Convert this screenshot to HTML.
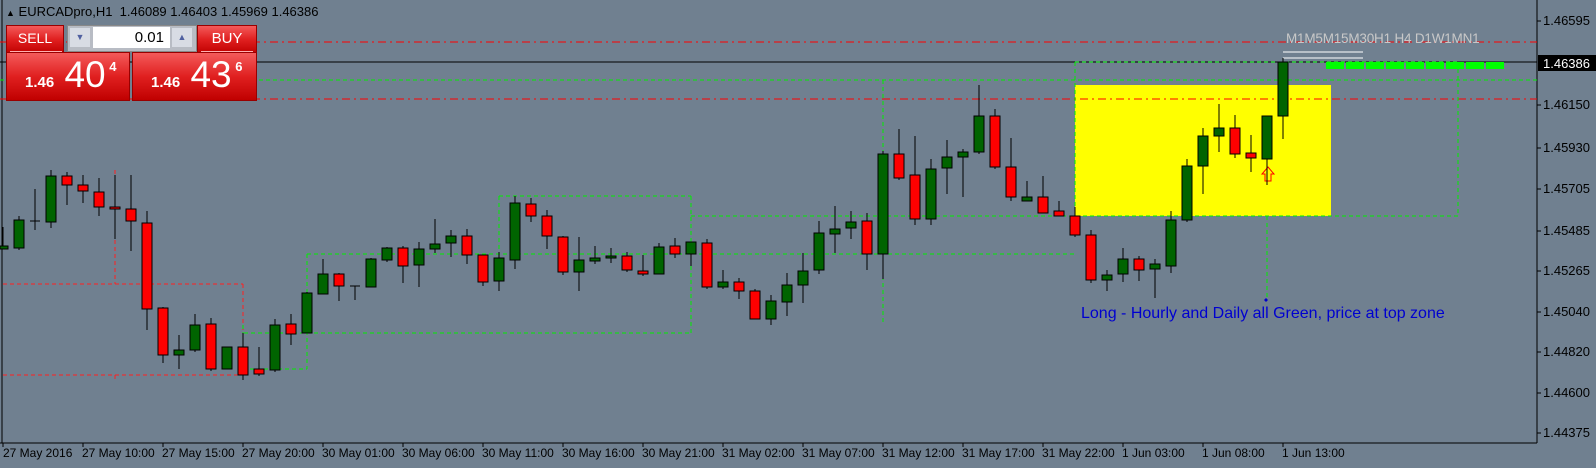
<!DOCTYPE html>
<html><head><meta charset="utf-8"><style>
body{margin:0;width:1596px;height:468px;background:#708090;overflow:hidden;font-family:"Liberation Sans",sans-serif;position:relative}
.a{position:absolute}
.t{font-size:12px;color:#000;white-space:nowrap}
.red{background:linear-gradient(#f45a5a,#e02020 50%,#c00000);border:1px solid #900}
</style></head><body>
<svg class="a" style="left:0;top:0" width="1596" height="468" shape-rendering="crispEdges">
<line x1="2" y1="0" x2="2" y2="443" stroke="#000"/>
<line x1="1537" y1="0" x2="1537" y2="443" stroke="#000"/>
<line x1="0" y1="443" x2="1537" y2="443" stroke="#000"/>
<rect x="1075" y="85" width="256" height="131" fill="#ffff00"/>
<g stroke="#ff0000" stroke-dasharray="8,4,2,4" fill="none">
<line x1="0" y1="42" x2="1537" y2="42"/><line x1="0" y1="99" x2="1537" y2="99"/>
</g>
<line x1="0" y1="62" x2="1537" y2="62" stroke="#000"/>
<g stroke="#ff2020" stroke-dasharray="4,3" fill="none">
<line x1="3" y1="284" x2="243" y2="284"/><line x1="243" y1="284" x2="243" y2="375"/><line x1="3" y1="375" x2="243" y2="375"/><line x1="115" y1="170" x2="115" y2="284"/><line x1="115" y1="375" x2="115" y2="380"/>
</g>
<g stroke="#00ee00" stroke-dasharray="4,3" fill="none">
<line x1="0" y1="80" x2="1537" y2="80"/>
<line x1="307" y1="254" x2="1075" y2="254"/>
<line x1="691" y1="216" x2="1458" y2="216"/>
<line x1="499" y1="196" x2="691" y2="196"/>
<line x1="499" y1="196" x2="499" y2="254"/>
<line x1="691" y1="196" x2="691" y2="333"/>
<line x1="244" y1="333" x2="691" y2="333"/>
<line x1="243" y1="369" x2="307" y2="369"/>
<line x1="307" y1="254" x2="307" y2="369"/>
<line x1="243" y1="325" x2="243" y2="334"/>
<line x1="883" y1="80" x2="883" y2="322"/>
<line x1="1075" y1="62" x2="1075" y2="216"/>
<line x1="1075" y1="62" x2="1458" y2="62"/>
<line x1="1458" y1="62" x2="1458" y2="216"/>
<line x1="1267" y1="216" x2="1267" y2="300"/>
</g>
<line x1="1283" y1="52" x2="1363" y2="52" stroke="#fff"/>
<line x1="1283" y1="58" x2="1363" y2="58" stroke="#fff"/>
<g fill="#00ff00"><rect x="1326" y="62" width="18" height="7"/><rect x="1346" y="62" width="18" height="7"/><rect x="1366" y="62" width="18" height="7"/><rect x="1386" y="62" width="18" height="7"/><rect x="1406" y="62" width="18" height="7"/><rect x="1426" y="62" width="18" height="7"/><rect x="1446" y="62" width="18" height="7"/><rect x="1466" y="62" width="18" height="7"/><rect x="1486" y="62" width="18" height="7"/></g>
<path d="M1268 167 L1274 174 L1271 174 L1271 181 L1265 181 L1265 174 L1262 174 Z" fill="none" stroke="#ff0000" shape-rendering="auto"/>
<circle cx="1266" cy="300" r="1.5" fill="#0000cc"/>
<g stroke="#000">
<line x1="3" y1="227" x2="3" y2="249"/><line x1="19" y1="216" x2="19" y2="250"/><line x1="35" y1="189" x2="35" y2="230"/><line x1="51" y1="170" x2="51" y2="228"/><line x1="67" y1="172" x2="67" y2="205"/><line x1="83" y1="175" x2="83" y2="203"/><line x1="99" y1="178" x2="99" y2="216"/><line x1="115" y1="175" x2="115" y2="239"/><line x1="131" y1="175" x2="131" y2="251"/><line x1="147" y1="211" x2="147" y2="330"/><line x1="163" y1="307" x2="163" y2="363"/><line x1="179" y1="335" x2="179" y2="369"/><line x1="195" y1="314" x2="195" y2="352"/><line x1="211" y1="318" x2="211" y2="371"/><line x1="227" y1="347" x2="227" y2="369"/><line x1="243" y1="333" x2="243" y2="380"/><line x1="259" y1="347" x2="259" y2="376"/><line x1="275" y1="319" x2="275" y2="372"/><line x1="291" y1="314" x2="291" y2="345"/><line x1="307" y1="292" x2="307" y2="333"/><line x1="323" y1="259" x2="323" y2="294"/><line x1="339" y1="273" x2="339" y2="301"/><line x1="355" y1="286" x2="355" y2="300"/><line x1="371" y1="258" x2="371" y2="287"/><line x1="387" y1="247" x2="387" y2="262"/><line x1="403" y1="246" x2="403" y2="283"/><line x1="419" y1="242" x2="419" y2="287"/><line x1="435" y1="219" x2="435" y2="253"/><line x1="451" y1="230" x2="451" y2="257"/><line x1="467" y1="229" x2="467" y2="264"/><line x1="483" y1="255" x2="483" y2="286"/><line x1="499" y1="252" x2="499" y2="291"/><line x1="515" y1="196" x2="515" y2="269"/><line x1="531" y1="198" x2="531" y2="222"/><line x1="547" y1="210" x2="547" y2="249"/><line x1="563" y1="236" x2="563" y2="275"/><line x1="579" y1="237" x2="579" y2="291"/><line x1="595" y1="246" x2="595" y2="264"/><line x1="611" y1="248" x2="611" y2="263"/><line x1="627" y1="252" x2="627" y2="272"/><line x1="643" y1="255" x2="643" y2="276"/><line x1="659" y1="243" x2="659" y2="274"/><line x1="675" y1="238" x2="675" y2="258"/><line x1="691" y1="242" x2="691" y2="266"/><line x1="707" y1="239" x2="707" y2="289"/><line x1="723" y1="270" x2="723" y2="289"/><line x1="739" y1="278" x2="739" y2="299"/><line x1="755" y1="289" x2="755" y2="319"/><line x1="771" y1="295" x2="771" y2="325"/><line x1="787" y1="273" x2="787" y2="316"/><line x1="803" y1="253" x2="803" y2="303"/><line x1="819" y1="221" x2="819" y2="274"/><line x1="835" y1="206" x2="835" y2="253"/><line x1="851" y1="211" x2="851" y2="239"/><line x1="867" y1="213" x2="867" y2="270"/><line x1="883" y1="151" x2="883" y2="279"/><line x1="899" y1="129" x2="899" y2="180"/><line x1="915" y1="136" x2="915" y2="225"/><line x1="931" y1="159" x2="931" y2="225"/><line x1="947" y1="140" x2="947" y2="194"/><line x1="963" y1="149" x2="963" y2="197"/><line x1="979" y1="85" x2="979" y2="154"/><line x1="995" y1="109" x2="995" y2="169"/><line x1="1011" y1="138" x2="1011" y2="201"/><line x1="1027" y1="181" x2="1027" y2="201"/><line x1="1043" y1="176" x2="1043" y2="213"/><line x1="1059" y1="201" x2="1059" y2="216"/><line x1="1075" y1="207" x2="1075" y2="237"/><line x1="1091" y1="230" x2="1091" y2="283"/><line x1="1107" y1="270" x2="1107" y2="291"/><line x1="1123" y1="248" x2="1123" y2="282"/><line x1="1139" y1="256" x2="1139" y2="281"/><line x1="1155" y1="259" x2="1155" y2="298"/><line x1="1171" y1="211" x2="1171" y2="273"/><line x1="1187" y1="159" x2="1187" y2="222"/><line x1="1203" y1="128" x2="1203" y2="194"/><line x1="1219" y1="104" x2="1219" y2="152"/><line x1="1235" y1="115" x2="1235" y2="158"/><line x1="1251" y1="135" x2="1251" y2="172"/><line x1="1267" y1="116" x2="1267" y2="185"/><line x1="1283" y1="58" x2="1283" y2="139"/>
<line x1="30" y1="221" x2="40" y2="221"/><line x1="350" y1="286" x2="360" y2="286"/>
</g>
<g stroke="#000" fill="#006400">
<rect x="0" y="246" width="8" height="3"/><rect x="14" y="220" width="10" height="28"/><rect x="46" y="176" width="10" height="46"/><rect x="174" y="350" width="10" height="5"/><rect x="190" y="325" width="10" height="25"/><rect x="222" y="347" width="10" height="22"/><rect x="270" y="325" width="10" height="45"/><rect x="302" y="293" width="10" height="40"/><rect x="318" y="274" width="10" height="20"/><rect x="366" y="259" width="10" height="28"/><rect x="382" y="248" width="10" height="12"/><rect x="414" y="249" width="10" height="16"/><rect x="430" y="244" width="10" height="5"/><rect x="446" y="236" width="10" height="7"/><rect x="494" y="258" width="10" height="23"/><rect x="510" y="203" width="10" height="57"/><rect x="574" y="260" width="10" height="12"/><rect x="590" y="258" width="10" height="3"/><rect x="606" y="256" width="10" height="2"/><rect x="654" y="247" width="10" height="27"/><rect x="686" y="242" width="10" height="12"/><rect x="718" y="282" width="10" height="5"/><rect x="766" y="301" width="10" height="18"/><rect x="782" y="285" width="10" height="17"/><rect x="798" y="271" width="10" height="14"/><rect x="814" y="233" width="10" height="37"/><rect x="830" y="229" width="10" height="5"/><rect x="846" y="222" width="10" height="6"/><rect x="878" y="154" width="10" height="100"/><rect x="926" y="169" width="10" height="50"/><rect x="942" y="157" width="10" height="11"/><rect x="958" y="152" width="10" height="5"/><rect x="974" y="116" width="10" height="36"/><rect x="1022" y="197" width="10" height="4"/><rect x="1102" y="275" width="10" height="5"/><rect x="1118" y="259" width="10" height="15"/><rect x="1150" y="264" width="10" height="5"/><rect x="1166" y="220" width="10" height="46"/><rect x="1182" y="166" width="10" height="54"/><rect x="1198" y="136" width="10" height="30"/><rect x="1214" y="128" width="10" height="8"/><rect x="1262" y="116" width="10" height="43"/><rect x="1278" y="62" width="10" height="54"/>
</g>
<g stroke="#000" fill="#ff0000">
<rect x="62" y="176" width="10" height="9"/><rect x="78" y="185" width="10" height="6"/><rect x="94" y="192" width="10" height="15"/><rect x="110" y="207" width="10" height="2"/><rect x="126" y="209" width="10" height="12"/><rect x="142" y="223" width="10" height="86"/><rect x="158" y="308" width="10" height="47"/><rect x="206" y="324" width="10" height="45"/><rect x="238" y="347" width="10" height="28"/><rect x="254" y="369" width="10" height="5"/><rect x="286" y="324" width="10" height="10"/><rect x="334" y="274" width="10" height="12"/><rect x="398" y="248" width="10" height="18"/><rect x="462" y="236" width="10" height="19"/><rect x="478" y="255" width="10" height="27"/><rect x="526" y="204" width="10" height="12"/><rect x="542" y="216" width="10" height="20"/><rect x="558" y="237" width="10" height="35"/><rect x="622" y="256" width="10" height="14"/><rect x="638" y="271" width="10" height="3"/><rect x="670" y="246" width="10" height="8"/><rect x="702" y="243" width="10" height="44"/><rect x="734" y="282" width="10" height="9"/><rect x="750" y="291" width="10" height="28"/><rect x="862" y="221" width="10" height="33"/><rect x="894" y="154" width="10" height="24"/><rect x="910" y="175" width="10" height="44"/><rect x="990" y="116" width="10" height="51"/><rect x="1006" y="167" width="10" height="30"/><rect x="1038" y="197" width="10" height="16"/><rect x="1054" y="211" width="10" height="5"/><rect x="1070" y="216" width="10" height="19"/><rect x="1086" y="235" width="10" height="45"/><rect x="1134" y="259" width="10" height="11"/><rect x="1230" y="128" width="10" height="26"/><rect x="1246" y="153" width="10" height="5"/>
</g>
<g stroke="#000">
<line x1="1537" y1="21" x2="1541" y2="21"/><line x1="1537" y1="105" x2="1541" y2="105"/><line x1="1537" y1="148" x2="1541" y2="148"/><line x1="1537" y1="189" x2="1541" y2="189"/><line x1="1537" y1="231" x2="1541" y2="231"/><line x1="1537" y1="271" x2="1541" y2="271"/><line x1="1537" y1="312" x2="1541" y2="312"/><line x1="1537" y1="352" x2="1541" y2="352"/><line x1="1537" y1="393" x2="1541" y2="393"/><line x1="1537" y1="433" x2="1541" y2="433"/>
<line x1="3" y1="443" x2="3" y2="447"/><line x1="83" y1="443" x2="83" y2="447"/><line x1="163" y1="443" x2="163" y2="447"/><line x1="243" y1="443" x2="243" y2="447"/><line x1="323" y1="443" x2="323" y2="447"/><line x1="403" y1="443" x2="403" y2="447"/><line x1="483" y1="443" x2="483" y2="447"/><line x1="563" y1="443" x2="563" y2="447"/><line x1="643" y1="443" x2="643" y2="447"/><line x1="723" y1="443" x2="723" y2="447"/><line x1="803" y1="443" x2="803" y2="447"/><line x1="883" y1="443" x2="883" y2="447"/><line x1="963" y1="443" x2="963" y2="447"/><line x1="1043" y1="443" x2="1043" y2="447"/><line x1="1123" y1="443" x2="1123" y2="447"/><line x1="1203" y1="443" x2="1203" y2="447"/><line x1="1283" y1="443" x2="1283" y2="447"/>
</g>
</svg>

<div class="a t" style="left:1543px;top:13px;font-size:13px">1.46595</div>
<div class="a" style="left:1538px;top:55px;width:58px;height:16px;background:#000"></div>
<div class="a t" style="left:1543px;top:56px;color:#fff;font-size:13px">1.46386</div>
<div class="a t" style="left:1543px;top:97px;font-size:13px">1.46150</div>
<div class="a t" style="left:1543px;top:140px;font-size:13px">1.45930</div>
<div class="a t" style="left:1543px;top:181px;font-size:13px">1.45705</div>
<div class="a t" style="left:1543px;top:223px;font-size:13px">1.45485</div>
<div class="a t" style="left:1543px;top:263px;font-size:13px">1.45265</div>
<div class="a t" style="left:1543px;top:304px;font-size:13px">1.45040</div>
<div class="a t" style="left:1543px;top:344px;font-size:13px">1.44820</div>
<div class="a t" style="left:1543px;top:385px;font-size:13px">1.44600</div>
<div class="a t" style="left:1543px;top:425px;font-size:13px">1.44375</div>

<div class="a t" style="left:3px;top:446px">27 May 2016</div>
<div class="a t" style="left:82px;top:446px">27 May 10:00</div>
<div class="a t" style="left:162px;top:446px">27 May 15:00</div>
<div class="a t" style="left:242px;top:446px">27 May 20:00</div>
<div class="a t" style="left:322px;top:446px">30 May 01:00</div>
<div class="a t" style="left:402px;top:446px">30 May 06:00</div>
<div class="a t" style="left:482px;top:446px">30 May 11:00</div>
<div class="a t" style="left:562px;top:446px">30 May 16:00</div>
<div class="a t" style="left:642px;top:446px">30 May 21:00</div>
<div class="a t" style="left:722px;top:446px">31 May 02:00</div>
<div class="a t" style="left:802px;top:446px">31 May 07:00</div>
<div class="a t" style="left:882px;top:446px">31 May 12:00</div>
<div class="a t" style="left:962px;top:446px">31 May 17:00</div>
<div class="a t" style="left:1042px;top:446px">31 May 22:00</div>
<div class="a t" style="left:1122px;top:446px">1 Jun 03:00</div>
<div class="a t" style="left:1202px;top:446px">1 Jun 08:00</div>
<div class="a t" style="left:1282px;top:446px">1 Jun 13:00</div>

<div class="a t" style="left:1286px;top:31px;color:#c8c8c8;font-size:13.5px;letter-spacing:-0.2px">M1M5M15M30H1 H4 D1W1MN1</div>
<div class="a" style="left:1081px;top:305px;color:#0000d0;font-size:16px;white-space:nowrap">Long - Hourly and Daily all Green, price at top zone</div>

<div class="a t" style="left:6px;top:4px;font-size:13px"><span style="font-size:9px">&#9650;</span> EURCADpro,H1&nbsp; 1.46089 1.46403 1.45969 1.46386</div>

<div class="a red" style="left:6px;top:25px;width:56px;height:27px;border-bottom:none"></div>
<div class="a" style="left:10px;top:51px;width:52px;height:1px;background:#ffb0b0"></div>
<div class="a" style="left:6px;top:30px;width:58px;text-align:center;color:#fff;font-size:14px">SELL</div>
<div class="a" style="left:67px;top:25px;width:128px;height:25px;background:#b8bcc4;border:1px solid #888"></div>
<div class="a" style="left:70px;top:28px;width:20px;height:19px;background:#d8dce4;color:#5060a0;font-size:9px;text-align:center;line-height:19px">&#9660;</div>
<div class="a" style="left:93px;top:27px;width:77px;height:21px;background:#fff;font-size:15px;text-align:right;line-height:21px;box-sizing:border-box;padding-right:6px">0.01</div>
<div class="a" style="left:172px;top:28px;width:20px;height:19px;background:#d8dce4;color:#5060a0;font-size:9px;text-align:center;line-height:19px">&#9650;</div>
<div class="a red" style="left:197px;top:25px;width:58px;height:27px;border-bottom:none"></div>
<div class="a" style="left:201px;top:51px;width:52px;height:1px;background:#ffb0b0"></div>
<div class="a" style="left:197px;top:30px;width:60px;text-align:center;color:#fff;font-size:15px">BUY</div>
<div class="a red" style="left:6px;top:52px;width:122px;height:47px"></div>
<div class="a red" style="left:132px;top:52px;width:123px;height:47px"></div>
<div class="a" style="left:25px;top:54px;color:#fff;white-space:nowrap"><b style="font-size:15px">1.46</b><span style="font-size:37px"> 40</span><b style="font-size:13px;vertical-align:16px"> 4</b></div>
<div class="a" style="left:151px;top:54px;color:#fff;white-space:nowrap"><b style="font-size:15px">1.46</b><span style="font-size:37px"> 43</span><b style="font-size:13px;vertical-align:16px"> 6</b></div>
</body></html>
